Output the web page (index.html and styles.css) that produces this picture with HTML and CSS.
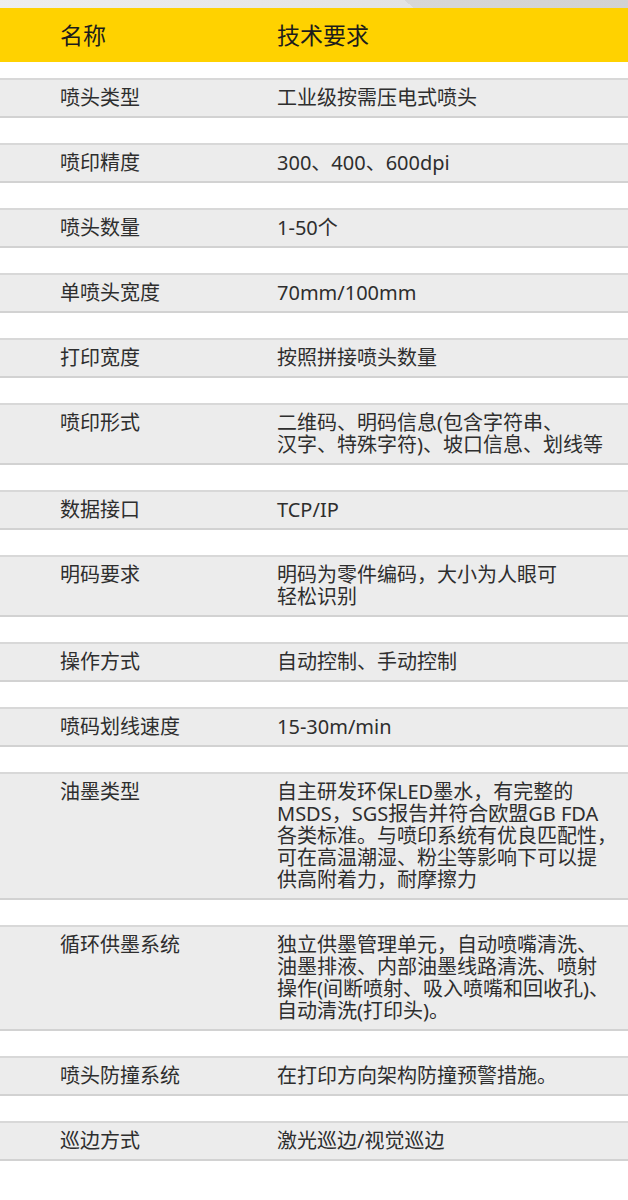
FILE: index.html
```html
<!DOCTYPE html>
<html lang="zh-CN">
<head>
<meta charset="utf-8">
<title>技术参数</title>
<link rel="stylesheet" href="styles.css">
</head>
<body>
<div class="page">
  <div class="topbar"></div>
  <div class="thead">
    <div class="c1">名称</div>
    <div class="c2">技术要求</div>
  </div>
  <div class="rows">
    <div class="row"><div class="c1">喷头类型</div><div class="c2">工业级按需压电式喷头</div></div>
    <div class="row"><div class="c1">喷印精度</div><div class="c2">300、400、600dpi</div></div>
    <div class="row"><div class="c1">喷头数量</div><div class="c2">1-50个</div></div>
    <div class="row"><div class="c1">单喷头宽度</div><div class="c2">70mm/100mm</div></div>
    <div class="row"><div class="c1">打印宽度</div><div class="c2">按照拼接喷头数量</div></div>
    <div class="row"><div class="c1">喷印形式</div><div class="c2">二维码、明码信息(包含字符串、<br>汉字、特殊字符)、坡口信息、划线等</div></div>
    <div class="row"><div class="c1">数据接口</div><div class="c2">TCP/IP</div></div>
    <div class="row"><div class="c1">明码要求</div><div class="c2">明码为零件编码，大小为人眼可<br>轻松识别</div></div>
    <div class="row"><div class="c1">操作方式</div><div class="c2">自动控制、手动控制</div></div>
    <div class="row"><div class="c1">喷码划线速度</div><div class="c2">15-30m/min</div></div>
    <div class="row"><div class="c1">油墨类型</div><div class="c2">自主研发环保LED墨水，有完整的<br>MSDS，SGS报告并符合欧盟GB FDA<br>各类标准。与喷印系统有优良匹配性，<br>可在高温潮湿、粉尘等影响下可以提<br>供高附着力，耐摩擦力</div></div>
    <div class="row"><div class="c1">循环供墨系统</div><div class="c2">独立供墨管理单元，自动喷嘴清洗、<br>油墨排液、内部油墨线路清洗、喷射<br>操作(间断喷射、吸入喷嘴和回收孔)、<br>自动清洗(打印头)。</div></div>
    <div class="row"><div class="c1">喷头防撞系统</div><div class="c2">在打印方向架构防撞预警措施。</div></div>
    <div class="row"><div class="c1">巡边方式</div><div class="c2">激光巡边/视觉巡边</div></div>
  </div>
</div>
</body>
</html>
```

FILE: styles.css
```css
html, body {
  margin: 0;
  padding: 0;
  background: #ffffff;
}

.page {
  width: 628px;
  font-family: "Noto Sans", "Noto Sans CJK SC", sans-serif;
  color: #2e2e2e;
}

.topbar {
  height: 8px;
  background: linear-gradient(39deg, #eeeeee 0%, #e3e3e3 64.9%, #d7d7d7 64.9%, #d2d2d2 100%);
}

.thead {
  display: grid;
  grid-template-columns: 277px 1fr;
  align-items: center;
  height: 54px;
  background: #ffd200;
  color: #1c1c1c;
  font-size: 23px;
  line-height: 26px;
}

.c1 {
  padding-left: 60px;
  white-space: nowrap;
}

.c2 {
  white-space: nowrap;
}

.rows {
  display: flex;
  flex-direction: column;
  gap: 25px;
  margin-top: 16px;
}

.row {
  display: grid;
  grid-template-columns: 277px 1fr;
  align-items: start;
  background: #ececec;
  border-top: 2px solid #d8d8d8;
  border-bottom: 2px solid #d2d2d2;
  padding: 7px 0;
  font-size: 20px;
  line-height: 22px;
}
```
